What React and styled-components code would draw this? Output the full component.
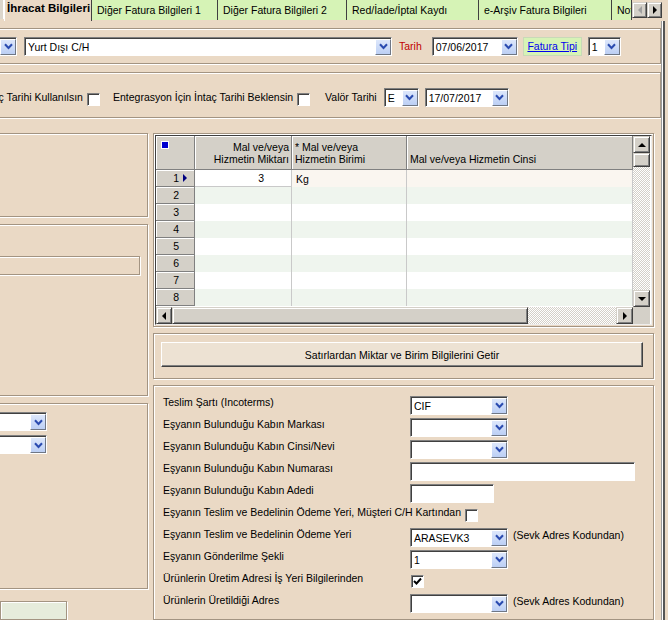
import React from "react";
import styled, { createGlobalStyle } from "styled-components";

const BG = "#ead9c5";
const GREEN = "#d6f3b6";
const FACE = "#d4d0c8";

const GlobalStyle = createGlobalStyle`
  body {
    margin: 0;
    background: ${BG};
    font-family: "Liberation Sans", Arial, sans-serif;
    font-size: 10.5px;
    color: #000;
  }
  * { box-sizing: border-box; }
`;

const Screen = styled.div`
  width: 668px;
  height: 620px;
  overflow: hidden;
  display: flex;
  flex-direction: column;
`;

const TabStrip = styled.div`
  display: flex;
  height: 21px;
  flex: none;
  padding-right: 6px;
`;

const TabStub = styled.div`
  width: 5px;
  height: 19px;
  background: #dcd6cc;
  border-right: 1px solid #fff;
`;

const Tab = styled.div`
  width: ${(p) => p.$w}px;
  flex: none;
  height: ${(p) => (p.$active ? 21 : 20)}px;
  padding: ${(p) => (p.$active ? "2px 0 0 2px" : "4px 0 0 5px")};
  background: ${(p) => (p.$active ? BG : GREEN)};
  font-size: ${(p) => (p.$active ? "11.5px" : "10.5px")};
  font-weight: ${(p) => (p.$active ? "bold" : "normal")};
  border-left: ${(p) => (p.$active ? "1px solid #fff" : "none")};
  border-right: 1px solid #404040;
  white-space: nowrap;
  overflow: hidden;
`;

const TabArrows = styled.div`
  display: flex;
  padding-top: 2px;
  margin-left: auto;
`;

const ArrowBtn = styled.div`
  width: ${(p) => p.$w || 15}px;
  height: ${(p) => p.$h || 16}px;
  background: ${FACE};
  border: 1px solid;
  border-color: ${FACE} #404040 #404040 ${FACE};
  box-shadow: inset 1px 1px 0 #fff, inset -1px -1px 0 #808080;
  display: flex;
  align-items: center;
  justify-content: center;
  flex: none;
`;

const Workspace = styled.div`
  flex: 1;
  display: flex;
  min-height: 0;
`;

const Main = styled.div`
  width: 661px;
  display: flex;
  flex-direction: column;
`;

const RightEdge = styled.div`
  flex: 1;
  border-left: 1px solid #9a9a9a;
  box-shadow: inset 1px 0 0 #fff, inset 3px 0 0 #555;
`;

const Panel = styled.div`
  border: 1px solid #a39482;
  box-shadow: inset 1px 1px 0 #fff, 1px 1px 0 #fff;
  height: ${(p) => (p.$h ? `${p.$h}px` : "auto")};
  margin-top: ${(p) => p.$mt || 0}px;
  flex: ${(p) => (p.$grow ? 1 : "none")};
`;

const HeaderPanel = styled(Panel)`
  margin-left: -10px;
  display: flex;
  align-items: center;
  padding-top: ${(p) => p.$pt || 0}px;
`;

const ComboBox = styled.div`
  display: flex;
  flex: none;
  width: ${(p) => p.$w}px;
  height: 19px;
  margin-left: ${(p) => p.$ml || 0}px;
  background: #fff;
  border: 1px solid;
  border-color: #808080 #fff #fff #808080;
  box-shadow: inset 1px 1px 0 #404040;
  padding: 1px 0 0 1px;
`;

const ComboText = styled.div`
  flex: 1;
  line-height: 16px;
  padding-left: 2px;
  white-space: nowrap;
  overflow: hidden;
`;

const DropBtn = styled.div`
  width: 16px;
  height: 16px;
  flex: none;
  background: linear-gradient(#dde7fb, #bccff4);
  border: 1px solid;
  border-color: #fff #6f7785 #6f7785 #fff;
  display: flex;
  align-items: center;
  justify-content: center;
`;

const TextBox = styled(ComboBox)`
  padding-left: 3px;
  line-height: 16px;
`;

const FlatField = styled.div`
  width: ${(p) => p.$w}px;
  height: 19px;
  margin-top: ${(p) => p.$mt || 0}px;
  margin-left: ${(p) => p.$ml || 0}px;
  border: 1px solid #a39482;
  box-shadow: inset 1px 1px 0 #fff, 1px 1px 0 #fff;
  background: ${(p) => p.$bg || BG};
`;

const Label = styled.span`
  white-space: nowrap;
  margin-left: ${(p) => p.$ml || 0}px;
  color: ${(p) => p.$color || "#000"};
  flex: none;
`;

const LinkBox = styled.div`
  width: 59px;
  height: 19px;
  margin-left: ${(p) => p.$ml || 0}px;
  background: ${GREEN};
  border: 1px solid #c9d9b8;
  color: #0000ee;
  text-decoration: underline;
  text-align: center;
  line-height: 17px;
  flex: none;
`;

const Check = styled.div`
  width: 13px;
  height: 13px;
  flex: none;
  margin-left: ${(p) => p.$ml || 0}px;
  margin-top: ${(p) => p.$mt || 0}px;
  background: #fff;
  border: 1px solid;
  border-color: #808080 #fff #fff #808080;
  box-shadow: inset 1px 1px 0 #404040;
  display: flex;
  align-items: center;
  justify-content: center;
`;

const Body = styled.div`
  display: grid;
  grid-template-columns: 160px 501px;
  column-gap: 5px;
  margin-left: -12px;
  margin-top: 15px;
  flex: 1;
  min-height: 0;
`;

const Column = styled.div`
  display: flex;
  flex-direction: column;
  min-height: 0;
`;

const LeftPanel = styled(Panel)`
  display: flex;
  flex-direction: column;
  gap: 4px;
  padding-top: ${(p) => p.$pt || 0}px;
`;

const DataGrid = styled.div`
  margin: 1px;
  display: grid;
  grid-template-columns: 477px 17px;
  grid-template-rows: 171px 17px;
  border: 1px solid;
  border-color: #404040 #eee #eee #404040;
  background: #fff;
`;

const Table = styled.div`
  display: grid;
  grid-template-columns: 39px 97px 115px 226px;
  grid-template-rows: 34px;
  grid-auto-rows: 17px;
  overflow: hidden;
`;

const HeadCell = styled.div`
  background: ${FACE};
  border-right: 1px solid #808080;
  border-bottom: 1px solid #808080;
  box-shadow: inset 1px 1px 0 #fff;
  display: flex;
  flex-direction: column;
  justify-content: ${(p) => (p.$top ? "flex-start" : "flex-end")};
  align-items: ${(p) => (p.$right ? "flex-end" : "flex-start")};
  padding: ${(p) => (p.$top ? "5px 0 0 5px" : "0 2px 4px 3px")};
  line-height: 12px;
  white-space: nowrap;
`;

const RowHead = styled.div`
  background: ${FACE};
  border-right: 1px solid #808080;
  border-bottom: 1px solid #808080;
  box-shadow: inset 1px 1px 0 #fff;
  display: flex;
  align-items: center;
  justify-content: flex-end;
  padding-right: 5px;
  gap: 4px;
  line-height: 14px;
`;

const Pointer = styled.span`
  width: 6px;
  display: flex;
  align-items: center;
`;

const Cell = styled.div`
  background: ${(p) => p.$bg};
  border-right: 1px solid #c9c9c9;
  border-bottom: ${(p) => (p.$line ? "1px solid #c9c9c9" : "none")};
  text-align: ${(p) => (p.$right ? "right" : "left")};
  padding: ${(p) => (p.$right ? "1px 27px 0 0" : "2px 0 0 4px")};
  line-height: 14px;
`;

const Track = styled.div`
  display: flex;
  flex-direction: ${(p) => (p.$vertical ? "column" : "row")};
  background: repeating-conic-gradient(#fff 0% 25%, ${FACE} 0% 50%) 0 0 / 2px 2px;
`;

const Thumb = styled.div`
  width: ${(p) => (p.$vertical ? "17px" : `${p.$len}px`)};
  height: ${(p) => (p.$vertical ? `${p.$len}px` : "17px")};
  background: ${FACE};
  border: 1px solid;
  border-color: ${FACE} #404040 #404040 ${FACE};
  box-shadow: inset 1px 1px 0 #fff, inset -1px -1px 0 #808080;
  flex: none;
`;

const Spacer = styled.div`
  flex: 1;
`;

const Corner = styled.div`
  background: ${FACE};
`;

const ButtonPanel = styled(Panel)`
  padding: 8px 10px 0 7px;
`;

const WideButton = styled.button`
  display: block;
  width: 100%;
  height: 25px;
  font: inherit;
  background: #ede2d3;
  border: 1px solid;
  border-color: #fff #404040 #404040 #fff;
  box-shadow: inset -1px -1px 0 #808080;
  padding: 0;
`;

const FormPanel = styled(Panel)`
  padding: 8px 0 0 9px;
`;

const FormRow = styled.div`
  display: grid;
  grid-template-columns: ${(p) => (p.$span ? "auto 1fr" : "247px 1fr")};
  height: 22px;
  align-items: center;
`;

const FormLabel = styled.div`
  align-self: start;
  padding-top: 2px;
  line-height: 12px;
  white-space: nowrap;
`;

const Controls = styled.div`
  display: flex;
  align-items: center;
  gap: 5px;
`;

const Hint = styled.span`
  margin-top: -4px;
  white-space: nowrap;
`;

const Chevron = () => (
  <svg width="9" height="7" viewBox="0 0 9 7">
    <path d="M1 1.2 L4.5 5 L8 1.2" fill="none" stroke="#2a4bb0" strokeWidth="2" />
  </svg>
);

const Tri = ({ dir, color = "#000" }) => {
  const pts = {
    left: "4,0 4,8 0,4",
    right: "0,0 0,8 4,4",
    up: "0,4 8,4 4,0",
    down: "0,0 8,0 4,4",
  }[dir];
  const vertical = dir === "up" || dir === "down";
  return (
    <svg width={vertical ? 8 : 4} height={vertical ? 4 : 8}>
      <polygon points={pts} fill={color} />
    </svg>
  );
};

const Combo = ({ w, value, ml }) => (
  <ComboBox $w={w} $ml={ml}>
    <ComboText>{value}</ComboText>
    <DropBtn>
      <Chevron />
    </DropBtn>
  </ComboBox>
);

const CheckMark = () => (
  <svg width="9" height="9" viewBox="0 0 9 9">
    <path d="M1 4 L3.5 6.5 L8 1.5" fill="none" stroke="#000" strokeWidth="2" />
  </svg>
);

const tabs = [
  { label: "Diğer Fatura Bilgileri 1", w: 126 },
  { label: "Diğer Fatura Bilgileri 2", w: 129 },
  { label: "Red/İade/İptal Kaydı", w: 132 },
  { label: "e-Arşiv Fatura Bilgileri", w: 133 },
  { label: "Not", w: 20 },
];

const rowCount = 8;

function ItemGrid() {
  const rows = [];
  for (let i = 1; i <= rowCount; i++) {
    const even = i % 2 === 0;
    const base = even ? "#eff5ee" : "#fff";
    rows.push(
      <React.Fragment key={i}>
        <RowHead>
          <span>{i}</span>
          <Pointer>{i === 1 && <Tri dir="right" color="#000080" />}</Pointer>
        </RowHead>
        <Cell $bg={base} $right $line={i === 1}>
          {i === 1 ? "3" : ""}
        </Cell>
        <Cell $bg={i === 1 ? "#faf6f0" : base}>{i === 1 ? "Kg" : ""}</Cell>
        <Cell $bg={i === 1 ? "#faf6f0" : base} />
      </React.Fragment>
    );
  }
  return (
    <DataGrid>
      <Table>
        <HeadCell $top>
          <svg width="8" height="8">
            <rect x="0.5" y="0.5" width="7" height="7" fill="#0000d0" stroke="#fff" />
          </svg>
        </HeadCell>
        <HeadCell $right>
          <span>Mal ve/veya</span>
          <span>Hizmetin Miktarı</span>
        </HeadCell>
        <HeadCell>
          <span>* Mal ve/veya</span>
          <span>Hizmetin Birimi</span>
        </HeadCell>
        <HeadCell>
          <span>Mal ve/veya Hizmetin Cinsi</span>
        </HeadCell>
        {rows}
      </Table>
      <Track $vertical>
        <ArrowBtn $w={17} $h={17}>
          <Tri dir="up" />
        </ArrowBtn>
        <Thumb $vertical $len={14} />
        <Spacer />
        <ArrowBtn $w={17} $h={17}>
          <Tri dir="down" />
        </ArrowBtn>
      </Track>
      <Track>
        <ArrowBtn $w={16} $h={17}>
          <Tri dir="left" />
        </ArrowBtn>
        <Thumb $len={356} />
        <Spacer />
        <ArrowBtn $w={17} $h={17}>
          <Tri dir="right" />
        </ArrowBtn>
      </Track>
      <Corner />
    </DataGrid>
  );
}

const formRows = [
  { label: "Teslim Şartı (Incoterms)", combo: { w: 98, value: "CIF" } },
  { label: "Eşyanın Bulunduğu Kabın Markası", combo: { w: 98, value: "" } },
  { label: "Eşyanın Bulunduğu Kabın Cinsi/Nevi", combo: { w: 98, value: "" } },
  { label: "Eşyanın Bulunduğu Kabın Numarası", text: 225 },
  { label: "Eşyanın Bulunduğu Kabın Adedi", text: 84 },
  { label: "Eşyanın Teslim ve Bedelinin Ödeme Yeri, Müşteri C/H Kartından", inlineCheck: true },
  { label: "Eşyanın Teslim ve Bedelinin Ödeme Yeri", combo: { w: 98, value: "ARASEVK3" }, hint: "(Sevk Adres Kodundan)" },
  { label: "Eşyanın Gönderilme Şekli", combo: { w: 98, value: "1" } },
  { label: "Ürünlerin Üretim Adresi İş Yeri Bilgilerinden", check: true },
  { label: "Ürünlerin Üretildiği Adres", combo: { w: 98, value: "" }, hint: "(Sevk Adres Kodundan)" },
];

export default function App() {
  return (
    <Screen>
      <GlobalStyle />
      <TabStrip>
        <TabStub />
        <Tab $active $w={88}>İhracat Bilgileri</Tab>
        {tabs.map((t) => (
          <Tab key={t.label} $w={t.w}>
            {t.label}
          </Tab>
        ))}
        <TabArrows>
          <ArrowBtn>
            <Tri dir="left" color="#a0a0a0" />
          </ArrowBtn>
          <ArrowBtn>
            <Tri dir="right" />
          </ArrowBtn>
        </TabArrows>
      </TabStrip>

      <Workspace>
        <Main>
          <HeaderPanel $mt={7} $h={36}>
            <Combo w={40} value="" ml={-14} />
            <Combo w={368} value="Yurt  Dışı  C/H" ml={7} />
            <Label $ml={7} $color="#c00000">Tarih</Label>
            <Combo w={86} value="07/06/2017" ml={10} />
            <LinkBox $ml={5}>Fatura Tipi</LinkBox>
            <Combo w={33} value="1" ml={6} />
          </HeaderPanel>

          <HeaderPanel $mt={8} $h={46} $pt={4}>
            <Label $ml={-10}>İntaç Tarihi Kullanılsın</Label>
            <Check $ml={4} $mt={4} />
            <Label $ml={13}>Entegrasyon İçin İntaç Tarihi Beklensin</Label>
            <Check $ml={4} $mt={4} />
            <Label $ml={15}>Valör Tarihi</Label>
            <Combo w={35} value="E" ml={7} />
            <Combo w={84} value="17/07/2017" ml={6} />
          </HeaderPanel>

          <Body>
            <Column>
              <LeftPanel $h={84} />
              <LeftPanel $h={172} $mt={7}>
                <FlatField $w={151} $mt={31} />
              </LeftPanel>
              <LeftPanel $h={186} $mt={7} $pt={8}>
                <Combo w={58} value="" />
                <Combo w={58} value="" />
              </LeftPanel>
              <FlatField $w={67} $ml={12} $mt={12} $bg="#e6ecdc" />
            </Column>

            <Column>
              <Panel $h={194}>
                <ItemGrid />
              </Panel>
              <ButtonPanel $h={46} $mt={6}>
                <WideButton>Satırlardan Miktar ve Birim Bilgilerini Getir</WideButton>
              </ButtonPanel>
              <FormPanel $mt={6} $grow>
                {formRows.map((r) =>
                  r.inlineCheck ? (
                    <FormRow key={r.label} $span>
                      <FormLabel>{r.label}</FormLabel>
                      <Check $ml={4} />
                    </FormRow>
                  ) : (
                    <FormRow key={r.label}>
                      <FormLabel>{r.label}</FormLabel>
                      <Controls>
                        {r.combo && <Combo w={r.combo.w} value={r.combo.value} />}
                        {r.text && <TextBox $w={r.text} />}
                        {r.check && (
                          <Check $ml={1}>
                            <CheckMark />
                          </Check>
                        )}
                        {r.hint && <Hint>{r.hint}</Hint>}
                      </Controls>
                    </FormRow>
                  )
                )}
              </FormPanel>
            </Column>
          </Body>
        </Main>
        <RightEdge />
      </Workspace>
    </Screen>
  );
}
